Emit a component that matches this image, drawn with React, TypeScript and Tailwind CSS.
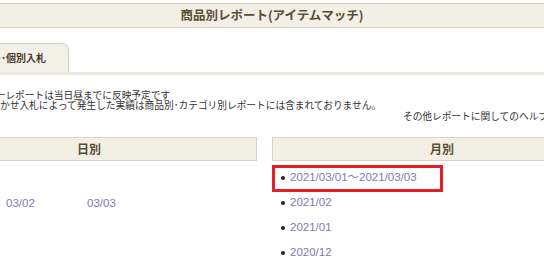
import React from "react";

const jp = { fontFamily: '"Noto Sans CJK JP", "Noto Sans", sans-serif' };
const num = { fontFamily: '"Liberation Sans", "Noto Sans CJK JP", sans-serif' };

export default function App() {
  const months = ["2021/03/01〜2021/03/03", "2021/02", "2021/01", "2020/12"];
  return (
    <div className="w-[544px] h-[262px] overflow-hidden bg-white" style={jp}>
      <div className="w-[691px] -ml-[79px] pt-[3px]">
        {/* header */}
        <div className="h-[25px] border-y border-[#d4cfc0] bg-[#f2efe5] flex items-center justify-center pl-[11px]">
          <span className="text-[12.5px] font-bold text-[#5c4b37] leading-none">商品別レポート(アイテムマッチ)</span>
        </div>

        {/* tabs */}
        <div className="mt-[15px]">
          <div className="ml-[8px] w-[140px] h-[29px] border-t border-r border-[#d4cfc0] rounded-tr-[7px] bg-[#f3f0e7] flex items-center justify-end pr-[22px]">
            <span className="text-[10px] font-bold text-[#4a3c2c] leading-none">サマリー･個別入札</span>
          </div>
          <div className="h-[3px] bg-[#ebe9df]" />
        </div>

        {/* notes */}
        <div className="mt-[15px] text-[9.7px] leading-[10px] text-[#333] whitespace-nowrap">
          <div className="ml-[36px]">※サマリーレポートは当日昼までに反映予定です</div>
          <div className="ml-[50px]">※おまかせ入札によって発生した実績は商品別･カテゴリ別レポートには含まれておりません。</div>
          <div className="mt-[1px] ml-[482px]">その他レポートに関してのヘルプはこちら</div>
        </div>

        {/* columns */}
        <div className="mt-[16px] flex gap-[15px]">
          <div className="w-[336px]">
            <div className="h-[24px] border border-[#d8d3c3] bg-[#f2efe5] flex items-center justify-center">
              <span className="text-[12px] font-bold text-[#5c4b37] leading-none">日別</span>
            </div>
            <div className="mt-[30px] h-[25px] grid grid-cols-[81px_81px_81px_81px] items-center text-[11.5px] text-[#7f78b8]" style={num}>
              <span className="pl-[4px]">03/01</span>
              <span className="pl-[4px]">03/02</span>
              <span className="pl-[4px]">03/03</span>
              <span />
            </div>
          </div>
          <div className="w-[340px]">
            <div className="h-[24px] border border-[#d8d3c3] bg-[#f2efe5] flex items-center justify-center">
              <span className="text-[12px] font-bold text-[#5c4b37] leading-none">月別</span>
            </div>
            <ul className="mt-[4px]">
              {months.map((m, i) => (
                <li key={m} className="relative h-[25px] flex items-center">
                  <span className="ml-[9px] w-[4px] h-[4px] rounded-full bg-[#222]" />
                  <span className="ml-[5px] text-[11.5px] text-[#7f78b8]" style={num}>{m}</span>
                  {i === 0 && (
                    <span className="absolute top-0 left-0 w-[171px] h-[27px] border-[3px] border-[#e31e25]" />
                  )}
                </li>
              ))}
            </ul>
          </div>
        </div>
      </div>
    </div>
  );
}
